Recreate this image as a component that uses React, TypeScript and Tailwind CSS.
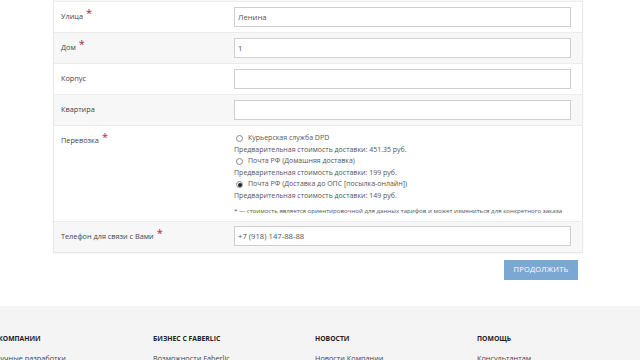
import { useState } from 'react';

const font = { fontFamily: "'Open Sans', 'Liberation Sans', sans-serif" };

function Star() {
    return <span className="ml-[3px] relative -top-[2px] text-[11px] leading-none text-[#a3294a]">*</span>;
}

function Champ({ value }: { value?: string }) {
    return (
        <input
            readOnly
            value={value ?? ''}
            className="block h-[20px] w-full border border-[#cfcfcf] bg-white px-[3px] text-[7.7px] text-[#555] outline-none"
            style={font}
        />
    );
}

function Row({ label, required, value, gray }: { label: string; required?: boolean; value?: string; gray?: boolean }) {
    return (
        <div className={`flex border-b border-[#ececec] ${gray ? 'bg-[#f7f7f7]' : 'bg-white'}`}>
            <div className="w-[180px] shrink-0 pl-[7px] pt-[7px] text-[7.3px] leading-[14px] text-[#444]">
                {label}
                {required && <Star />}
            </div>
            <div className="flex-1 py-[5px] pr-[11px]">
                <Champ value={value} />
            </div>
        </div>
    );
}

const tarifs = [
    { id: 'dpd', nom: 'Курьерская служба DPD', prix: '451.35 руб.' },
    { id: 'home', nom: 'Почта РФ (Домашняя доставка)', prix: '199 руб.' },
    { id: 'ops', nom: 'Почта РФ (Доставка до ОПС [посылка-онлайн])', prix: '149 руб.' },
];

const colonnes = [
    { titre: 'О КОМПАНИИ', lien: 'Научные разработки' },
    { titre: 'БИЗНЕС С FABERLIC', lien: 'Возможности Faberlic' },
    { titre: 'НОВОСТИ', lien: 'Новости Компании' },
    { titre: 'ПОМОЩЬ', lien: 'Консультантам' },
];

export default function App() {
    const [choix, setChoix] = useState('ops');

    return (
        <div className="h-[360px] w-[640px] overflow-hidden bg-white" style={font}>
            <div className="ml-[53px] w-[530px] border-x border-b border-[#e9e9e9] shadow-[0_1px_2px_rgba(0,0,0,0.04)]">
                <div className="h-[2px] border-b border-[#ececec] bg-[#f7f7f7]" />
                <Row label="Улица" required value="Ленина" />
                <Row label="Дом" required value="1" gray />
                <Row label="Корпус" />
                <Row label="Квартира" gray />

                <div className="flex border-b border-[#ececec] bg-white">
                    <div className="w-[180px] shrink-0 pl-[7px] pt-[7px] text-[7.3px] leading-[14px] text-[#444]">
                        Перевозка
                        <Star />
                    </div>
                    <div className="flex-1 pt-[7px] pb-[5px] pr-[11px] text-[7px] text-[#555]">
                        {tarifs.map((t) => (
                            <div key={t.id} className="mb-[1px]">
                                <label className="flex h-[11px] items-center gap-[5px] pl-[2px]" onClick={() => setChoix(t.id)}>
                                    <span className="flex h-[7px] w-[7px] items-center justify-center rounded-full border border-[#888] bg-white">
                                        {choix === t.id && <span className="h-[4px] w-[4px] rounded-full bg-[#222]" />}
                                    </span>
                                    {t.nom}
                                </label>
                                <div className="h-[11px] leading-[11px]">Предварительная стоимость доставки: {t.prix}</div>
                            </div>
                        ))}
                        <div className="mt-[5px] text-[6.15px] leading-[10px] text-[#555]">
                            * — стоимость является ориентировочной для данных тарифов и может измениться для конкретного заказа
                        </div>
                    </div>
                </div>

                <div className="flex bg-[#f7f7f7]">
                    <div className="w-[180px] shrink-0 pl-[7px] pt-[7px] text-[7.3px] leading-[14px] text-[#444]">
                        Телефон для связи с Вами
                        <Star />
                    </div>
                    <div className="flex-1 pt-[4px] pb-[6px] pr-[11px]">
                        <Champ value="+7 (918) 147-88-88" />
                    </div>
                </div>
            </div>

            <div className="flex justify-end pr-[62px] pt-[7px]">
                <button className="h-[20px] w-[74px] bg-[#7ba7d3] text-[7.5px] tracking-[0.2px] text-white">ПРОДОЛЖИТЬ</button>
            </div>

            <footer className="mt-[26px] h-[60px] bg-[#f4f4f4]">
                <div className="-ml-[9px] flex pt-[28px]">
                    {colonnes.map((c) => (
                        <div key={c.titre} className="w-[162px] shrink-0">
                            <div className="text-[6.8px] font-bold leading-[10px] text-[#222]">{c.titre}</div>
                            <div className="mt-[9px] text-[7.3px] leading-[10px] text-[#444]">{c.lien}</div>
                        </div>
                    ))}
                </div>
            </footer>
        </div>
    );
}
